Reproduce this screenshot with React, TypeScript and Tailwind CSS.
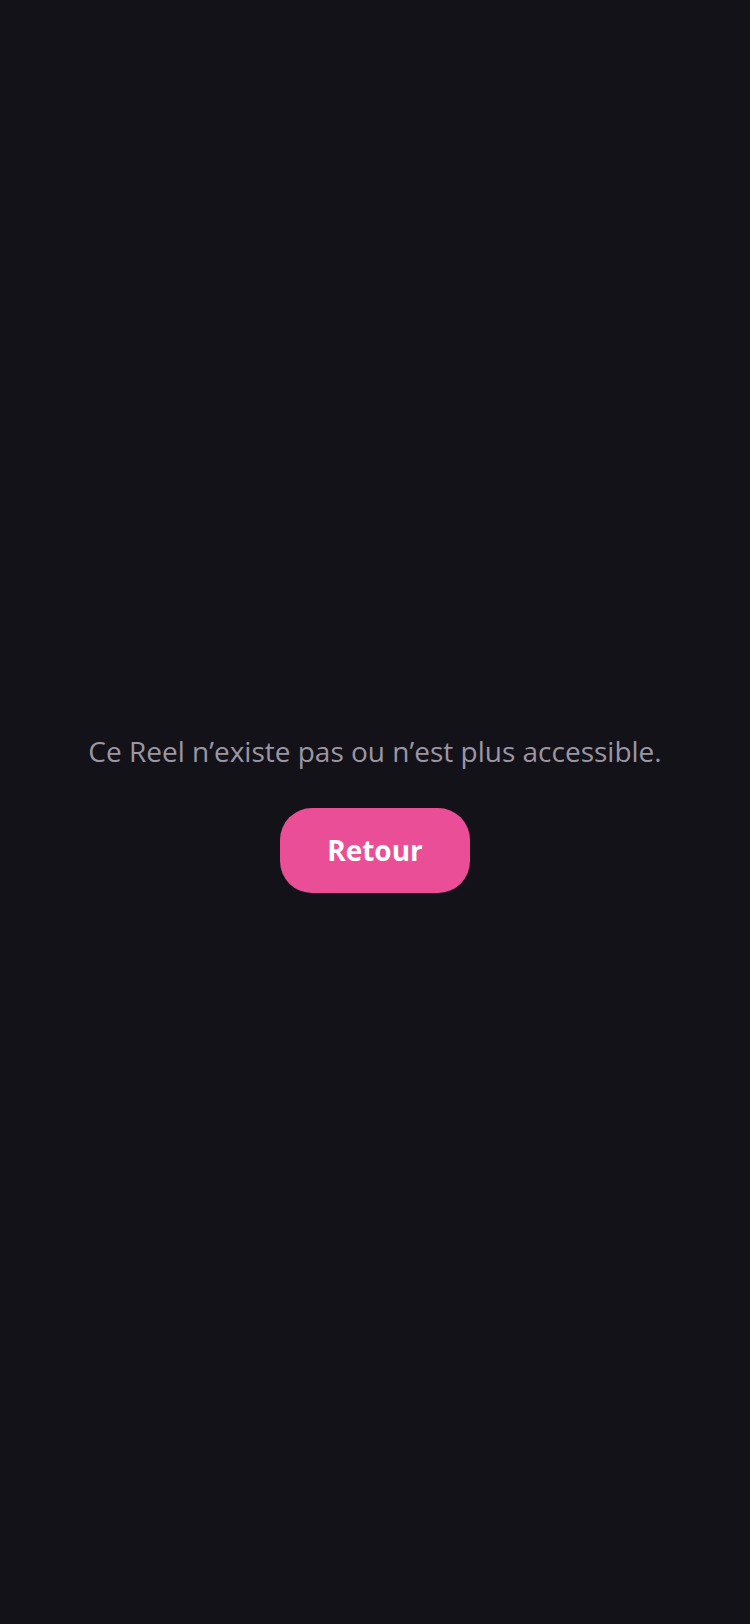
export default function App() {
  return (
    <div
      className="min-h-screen w-full bg-[#131219] flex flex-col items-center justify-center"
      style={{ fontFamily: '"Open Sans", "Noto Sans", sans-serif' }}
    >
      <p className="text-[28px] leading-[38px] text-[#9b96a4] text-center">
        Ce Reel n’existe pas ou n’est plus accessible.
      </p>
      <button
        type="button"
        className="mt-[38px] h-[85px] w-[190px] rounded-[32px] bg-[#e94e97] text-white text-[28px] font-bold"
      >
        Retour
      </button>
    </div>
  );
}
